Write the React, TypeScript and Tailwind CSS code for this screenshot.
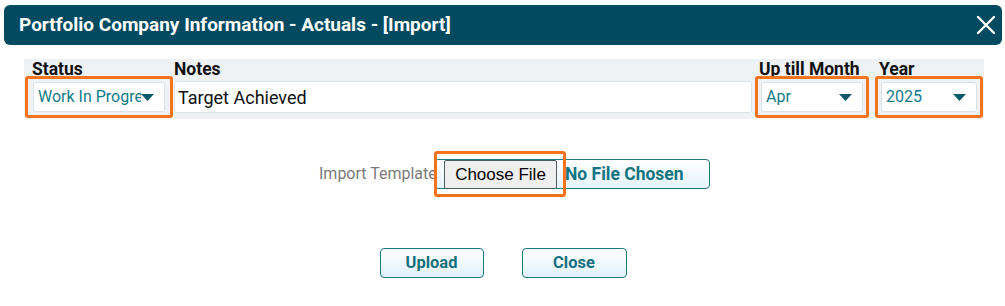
import React from 'react';

function Caret() {
  return (
    <svg width="13" height="7" viewBox="0 0 13 7" className="shrink-0">
      <path d="M0 0 L13 0 L6.5 7 Z" fill="#0b5a69" />
    </svg>
  );
}

function SelectBox({ value, className }: { value: string; className?: string }) {
  return (
    <div
      className={
        'flex h-full items-center justify-between rounded-[3px] border border-[#dbe3e7] bg-white pl-[4px] pr-[10px] ' +
        (className ?? '')
      }
    >
      <span className="overflow-hidden whitespace-nowrap text-[16px] text-[#137a8a]">{value}</span>
      <Caret />
    </div>
  );
}

export default function App() {
  return (
    <div className="h-[306px] w-[1005px] bg-white font-['Roboto',sans-serif]">
      {/* title bar */}
      <div className="ml-[4px] mt-[5px] flex h-[40px] w-[998px] items-center justify-between rounded-[6px] bg-[#014a5f] pl-[15px] pr-[6px]">
        <h1 className="text-[19px] font-bold text-white">
          Portfolio Company Information - Actuals - [Import]
        </h1>
        <svg width="20" height="20" viewBox="0 0 20 20">
          <path d="M2 2 L18 18 M18 2 L2 18" stroke="white" strokeWidth="2.4" strokeLinecap="round" />
        </svg>
      </div>

      {/* fields band */}
      <div className="ml-[24px] mt-[14px] flex h-[60px] w-[960px] bg-[#eef2f4] pl-[1px]">
        <div className="flex w-[148px] flex-col">
          <div className="h-[17px] pl-[7px] text-[17.5px] font-bold leading-[20px] text-[#111]">Status</div>
          <div className="h-[42px] rounded-[3px] border-[3px] border-[#f4731b] px-[5px] py-[3px]">
            <SelectBox value="Work In Progress" className="pr-[9px]" />
          </div>
        </div>
        <div className="ml-[1px] flex w-[578px] flex-col">
          <div className="h-[17px] text-[17.5px] font-bold leading-[20px] text-[#111]">Notes</div>
          <div className="mt-[5px] flex h-[32px] items-center rounded-[3px] border border-[#dbe3e7] bg-white pl-[3px] text-[18px] text-[#111]">
            Target Achieved
          </div>
        </div>
        <div className="ml-[3px] flex w-[114px] flex-col">
          <div className="h-[17px] whitespace-nowrap pl-[4px] text-[17.5px] font-bold leading-[20px] text-[#111]">Up till Month</div>
          <div className="h-[42px] rounded-[3px] border-[3px] border-[#f4731b] px-[3px] py-[3px]">
            <SelectBox value="Apr" />
          </div>
        </div>
        <div className="ml-[6px] flex w-[108px] flex-col">
          <div className="h-[17px] pl-[4px] text-[17.5px] font-bold leading-[20px] text-[#111]">Year</div>
          <div className="h-[42px] rounded-[3px] border-[3px] border-[#f4731b] px-[3px] py-[3px]">
            <SelectBox value="2025" />
          </div>
        </div>
      </div>

      {/* import row */}
      <div className="mt-[40px] flex h-[30px] items-center pl-[319px]">
        <span className="w-[115px] overflow-hidden whitespace-nowrap text-[16px] text-[#7a7a7a]">Import Template</span>
        <div className="flex h-[30px] w-[276px] items-center rounded-[4px] border border-[#1d7a80] bg-gradient-to-b from-white to-[#e3f3fb]">
          <div className="-my-[8px] -ml-px h-[46px] rounded-[3px] border-[3px] border-[#f4731b] pb-[5px] pl-[7px] pr-[6px] pt-[6px]">
            <button className="h-[29px] w-[113px] rounded-[2px] border border-[#4f5b5e] bg-[#efefef] font-['Liberation_Sans',sans-serif] text-[17px] text-black">
              Choose File
            </button>
          </div>
          <span className="-ml-[1px] text-[17.5px] font-bold text-[#127480]">No File Chosen</span>
        </div>
      </div>

      {/* buttons */}
      <div className="mt-[59px] flex justify-center gap-[38px] pl-[1px]">
        <button className="h-[30px] w-[104px] rounded-[4px] border border-[#1d7a80] bg-gradient-to-b from-white to-[#dff1fa] text-[16.5px] font-bold text-[#17707e]">
          Upload
        </button>
        <button className="h-[30px] w-[105px] rounded-[4px] border border-[#1d7a80] bg-gradient-to-b from-white to-[#dff1fa] text-[16.5px] font-bold text-[#17707e]">
          Close
        </button>
      </div>
    </div>
  );
}
